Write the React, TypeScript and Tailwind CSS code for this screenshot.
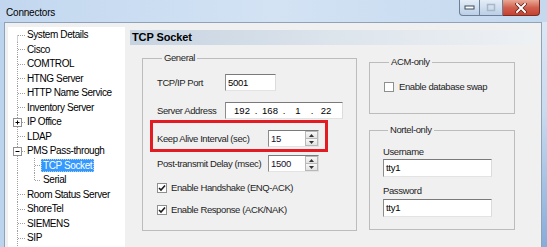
import React from "react";

type TreeItem = {
  label: string;
  first?: boolean;
  box?: "+" | "-";
  child?: boolean;
  lastChild?: boolean;
  selected?: boolean;
};

const treeItems: TreeItem[] = [
  { label: "System Details", first: true },
  { label: "Cisco" },
  { label: "COMTROL" },
  { label: "HTNG Server" },
  { label: "HTTP Name Service" },
  { label: "Inventory Server" },
  { label: "IP Office", box: "+" },
  { label: "LDAP" },
  { label: "PMS Pass-through", box: "-" },
  { label: "TCP Socket", child: true, selected: true },
  { label: "Serial", child: true, lastChild: true },
  { label: "Room Status Server" },
  { label: "ShoreTel" },
  { label: "SIEMENS" },
  { label: "SIP" },
];

const dot = { stroke: "#a0a0a0", strokeWidth: 1, strokeDasharray: "1 1" };

function TreeRow({ item }: { item: TreeItem }) {
  const w = item.child ? 33 : 19;
  return (
    <div className="flex h-[14.5px] items-center">
      <svg width={w} height={15} className="shrink-0">
        <line x1={9.5} y1={item.first ? 7.5 : 0} x2={9.5} y2={15} {...dot} />
        {item.child ? (
          <>
            <line x1={26.5} y1={0} x2={26.5} y2={item.lastChild ? 7.5 : 15} {...dot} />
            <line x1={27} y1={7.5} x2={33} y2={7.5} {...dot} />
          </>
        ) : (
          <line x1={10} y1={7.5} x2={18} y2={7.5} {...dot} />
        )}
        {item.box && (
          <>
            <rect x={5.5} y={3.5} width={8} height={8} fill="#fff" stroke="#919191" />
            <line x1={7.5} y1={7.5} x2={11.5} y2={7.5} stroke="#000" />
            {item.box === "+" && <line x1={9.5} y1={5.5} x2={9.5} y2={9.5} stroke="#000" />}
          </>
        )}
      </svg>
      {item.selected ? (
        <span className="border border-dotted border-[#a8cdf3] bg-[#3399ff] px-[1px] text-[10px] leading-[11px] tracking-[-0.4px] text-white">
          {item.label}
        </span>
      ) : (
        <span className={`text-[10px] leading-[12px] tracking-[-0.4px] text-black ${item.child ? "pl-[2px]" : ""}`}>
          {item.label}
        </span>
      )}
    </div>
  );
}

function CheckBox({ checked }: { checked?: boolean }) {
  return (
    <div className="flex h-[10px] w-[10px] shrink-0 items-center justify-center border border-[#8e8f8f] bg-white">
      {checked && (
        <svg width="8" height="8" viewBox="0 0 8 8">
          <path d="M1 4 L3 6 L7 1.5" fill="none" stroke="#1c1c1c" strokeWidth="1.6" />
        </svg>
      )}
    </div>
  );
}

function SpinBox({ value }: { value: string }) {
  return (
    <div className="flex h-[17px] w-[51px] border border-t-[#7a7a7a] border-l-[#8c8c8c] border-r-[#dcdcdc] border-b-[#e3e3e3] bg-white">
      <span className="flex-1 pl-[2px] text-[9.5px] leading-[15px] tracking-[-0.3px] text-[#1a1030]">{value}</span>
      <div className="flex w-[13px] flex-col">
        <div className="flex flex-1 items-center justify-center border border-[#b8b8b8] bg-gradient-to-b from-[#f8f8f8] to-[#e2e2e2]">
          <svg width="5" height="3"><path d="M0 3 L2.5 0 L5 3 Z" fill="#333" /></svg>
        </div>
        <div className="flex flex-1 items-center justify-center border border-t-0 border-[#b8b8b8] bg-gradient-to-b from-[#f8f8f8] to-[#e2e2e2]">
          <svg width="5" height="3"><path d="M0 0 L2.5 3 L5 0 Z" fill="#333" /></svg>
        </div>
      </div>
    </div>
  );
}

function TextBox({ value, className }: { value: string; className: string }) {
  return (
    <div
      className={`border border-t-[#7a7a7a] border-l-[#8c8c8c] border-r-[#dcdcdc] border-b-[#e3e3e3] bg-white pl-[2px] text-[9.5px] tracking-[-0.3px] text-black ${className}`}
    >
      {value}
    </div>
  );
}

const label = "text-[9.5px] leading-[12px] tracking-[-0.4px] text-[#1e1e1e]";

export default function App() {
  return (
    <div className="flex h-[247px] w-[547px] flex-col overflow-hidden bg-[#bdd4ee] font-['Liberation_Sans',Arial,sans-serif]">
      {/* title bar */}
      <div className="flex h-[22px] shrink-0 items-start bg-gradient-to-r from-[#c2d7ef] via-[#d3e3f4] to-[#c4d8ee]">
        <span className="pl-[6px] pt-[7px] text-[10px] leading-[12px] tracking-[-0.2px] text-black">Connectors</span>
        <div className="ml-auto mr-[7px] flex h-[16px]">
          <div className="flex w-[21px] items-center justify-center rounded-bl-[4px] border border-t-0 border-[#6d7f96] bg-gradient-to-b from-[#e4edf7] to-[#bccfe6]">
            <svg width="11" height="5">
              <rect x="1" y="1" width="9" height="3" fill="#fff" stroke="#3b4a5e" />
            </svg>
          </div>
          <div className="flex w-[23px] items-center justify-center border-b border-r border-[#6d7f96] bg-gradient-to-b from-[#e4edf7] to-[#bccfe6]">
            <svg width="10" height="9">
              <rect x="1.5" y="1.5" width="7" height="6" fill="none" stroke="#a9b8c9" strokeWidth="1.5" />
            </svg>
          </div>
          <div className="flex w-[37px] items-center justify-center rounded-br-[4px] border-b border-r border-[#7a2b25] bg-gradient-to-b from-[#e9a896] via-[#d1604f] to-[#c5412f]">
            <svg width="12" height="10" viewBox="0 0 12 10">
              <path d="M2 1 L10 9 M10 1 L2 9" stroke="#5a1d16" strokeWidth="3.4" strokeLinecap="square" />
              <path d="M2 1 L10 9 M10 1 L2 9" stroke="#fff" strokeWidth="2" strokeLinecap="square" />
            </svg>
          </div>
        </div>
      </div>

      <div className="flex min-h-0 flex-1">
        <div className="w-[4px] shrink-0" />
        {/* client area */}
        <div className="flex min-w-0 flex-1 border-l border-r border-t border-[#8ea2b9] bg-[#f0f0f0]">
          {/* tree */}
          <div className="ml-[3px] mt-[4px] w-[117px] shrink-0 bg-white pt-[1px]">
            {treeItems.map((item) => (
              <TreeRow key={item.label} item={item} />
            ))}
          </div>

          {/* page */}
          <div className="ml-[5px] mr-[5px] mt-[7px] flex min-w-0 flex-1 flex-col">
            <div className="flex h-[15px] items-center bg-gradient-to-r from-[#c6d3e1] via-[#dce4ec] to-[#eef1f4] pl-[2px]">
              <span className="text-[11px] font-bold leading-[13px] tracking-[-0.1px] text-black">TCP Socket</span>
            </div>

            <div className="flex pl-[12px]">
              {/* General */}
              <fieldset className="mt-[7px] h-[179px] w-[215px] border border-[#bcbcbc] pl-[14px]">
                <legend className={`ml-[5px] px-[2px] ${label}`}>General</legend>
                <div className="mt-[10px] flex h-[17px] items-center">
                  <span className={`w-[68px] ${label}`}>TCP/IP Port</span>
                  <TextBox value="5001" className="h-[17px] w-[51px] leading-[15px]" />
                </div>
                <div className="mt-[11px] flex h-[17px] items-center">
                  <span className={`w-[68px] ${label}`}>Server Address</span>
                  <div className="flex h-[17px] w-[118px] border border-t-[#7a7a7a] border-l-[#8c8c8c] border-r-[#dcdcdc] border-b-[#e3e3e3] bg-white pl-[5px] text-[9.5px] leading-[15px] text-black">
                    {["192", "168", "1", "22"].map((o, i) => (
                      <React.Fragment key={i}>
                        <span className="w-[22px] text-center">{o}</span>
                        {i < 3 && <span className="w-[6px] text-center">.</span>}
                      </React.Fragment>
                    ))}
                  </div>
                </div>
                <div className="-ml-[7px] mt-[1px] flex w-[178px] items-center border-[3px] border-[#e31b23] pb-[2px] pl-[4px] pt-[7px]">
                  <span className={`w-[111px] ${label}`}>Keep Alive Interval (sec)</span>
                  <SpinBox value="15" />
                </div>
                <div className="mt-[3px] flex h-[17px] items-center">
                  <span className={`w-[111px] ${label}`}>Post-transmit Delay (msec)</span>
                  <SpinBox value="1500" />
                </div>
                <div className="mt-[11px] flex h-[10px] items-center gap-[4px]">
                  <CheckBox checked />
                  <span className={label}>Enable Handshake (ENQ-ACK)</span>
                </div>
                <div className="mt-[12px] flex h-[10px] items-center gap-[4px]">
                  <CheckBox checked />
                  <span className={label}>Enable Response (ACK/NAK)</span>
                </div>
              </fieldset>

              {/* right column */}
              <div className="ml-[12px] flex w-[146px] flex-col">
                <fieldset className="mt-[11px] h-[58px] border border-[#bcbcbc] pl-[14px]">
                  <legend className={`ml-[5px] px-[2px] ${label}`}>ACM-only</legend>
                  <div className="mt-[14px] flex h-[10px] items-center gap-[5px]">
                    <CheckBox />
                    <span className={label}>Enable database swap</span>
                  </div>
                </fieldset>
                <fieldset className="mt-[10px] h-[106px] border border-[#bcbcbc] pl-[13px]">
                  <legend className={`ml-[5px] px-[2px] ${label}`}>Nortel-only</legend>
                  <div className={`mt-[10px] ${label}`}>Username</div>
                  <TextBox value="tty1" className="mt-[1px] h-[18px] w-[109px] leading-[16px]" />
                  <div className={`mt-[8px] ${label}`}>Password</div>
                  <TextBox value="tty1" className="mt-[2px] h-[18px] w-[109px] leading-[16px]" />
                </fieldset>
              </div>
            </div>
          </div>
        </div>
        <div className="w-[5px] shrink-0 bg-gradient-to-b from-[#dbe7f4] via-[#c9dbef] via-40% to-[#86acd9]" />
      </div>
    </div>
  );
}
